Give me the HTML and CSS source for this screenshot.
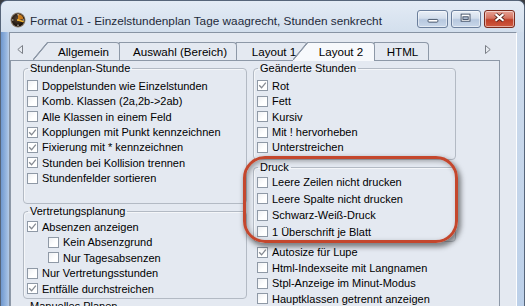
FILE: index.html
```html
<!DOCTYPE html>
<html lang="de">
<head>
  <meta charset="UTF-8" />
  <title>Format 01</title>
  <link rel="stylesheet" href="styles.css">
</head>
<body>

  <div class="window">
    <div class="titlebar">
      <!-- Programm-Icon (Uhr) -->
      <svg class="app-icon" viewBox="0 0 16 16" aria-hidden="true">
        <defs>
          <radialGradient id="face" cx="45%" cy="40%" r="60%">
            <stop offset="0" stop-color="#5a4634"/>
            <stop offset="1" stop-color="#120c08"/>
          </radialGradient>
        </defs>
        <circle cx="8" cy="8" r="7.5" fill="#8a7a68"/>
        <circle cx="8" cy="8" r="6.5" fill="url(#face)"/>
        <path d="M8 8 L8 2.2 A5.8 5.8 0 0 1 13.5 7 Z" fill="#e08a1e" opacity="0.85"/>
        <path d="M8 8 L13 9.5" stroke="#f2b430" stroke-width="1.6" stroke-linecap="round"/>
        <path d="M8 2 V3.4 M8 12.6 V14 M2 8 H3.4 M12.6 8 H14" stroke="#e8e2d8" stroke-width="1"/>
        <circle cx="8" cy="8" r="1" fill="#f2b430"/>
      </svg>
      <span class="title">Format 01 - Einzelstundenplan Tage waagrecht, Stunden senkrecht</span>
      <div class="caption-buttons">
        <span class="cbtn">
          <svg viewBox="0 0 31 18"><rect x="10.5" y="9.5" width="11" height="3" rx="1" fill="#fff" stroke="#3b4a60"/></svg>
        </span>
        <span class="cbtn">
          <svg viewBox="0 0 30 18"><rect x="9.5" y="3.5" width="10" height="8" fill="#fff" stroke="#3b4a60"/><rect x="11.5" y="6.5" width="6" height="3" fill="#a9b9cf" stroke="#3b4a60"/></svg>
        </span>
        <span class="cbtn close">
          <svg viewBox="0 0 31 18"><path d="M11 3.5 L20 11 M20 3.5 L11 11" stroke="#4a1a12" stroke-width="4.2"/><path d="M11 3.5 L20 11 M20 3.5 L11 11" stroke="#fff" stroke-width="2.4"/></svg>
        </span>
      </div>
    </div>

    <div class="client">
      <div class="tabstrip">
        <svg class="tab-arrow" viewBox="0 0 6 9"><path d="M5.5 0.5 L0.8 4.5 L5.5 8.5 Z" fill="#e8ecf2" stroke="#7a7f87"/></svg>
        <div class="tabs">
          <div class="tab t1">Allgemein</div>
          <div class="tab t2">Auswahl (Bereich)</div>
          <div class="tab t3">Layout 1</div>
          <div class="tab t4 active">Layout 2</div>
          <div class="tab t5">HTML</div>
        </div>
        <svg class="tab-arrow right" viewBox="0 0 6 9"><path d="M0.5 0.5 L5.2 4.5 L0.5 8.5 Z" fill="#e8ecf2" stroke="#7a7f87"/></svg>
      </div>

      <div class="panel">
        <div class="col left">
          <fieldset class="group g1">
            <legend>Stundenplan-Stunde</legend>
            <label class="opt"><span class="box"></span>Doppelstunden wie Einzelstunden</label>
            <label class="opt"><span class="box"></span>Komb. Klassen (2a,2b-&gt;2ab)</label>
            <label class="opt"><span class="box"></span>Alle Klassen in einem Feld</label>
            <label class="opt"><span class="box on"></span>Kopplungen mit Punkt kennzeichnen</label>
            <label class="opt"><span class="box on"></span>Fixierung mit * kennzeichnen</label>
            <label class="opt"><span class="box on"></span>Stunden bei Kollision trennen</label>
            <label class="opt"><span class="box"></span>Stundenfelder sortieren</label>
          </fieldset>
          <fieldset class="group g2">
            <legend>Vertretungsplanung</legend>
            <label class="opt"><span class="box on"></span>Absenzen anzeigen</label>
            <label class="opt sub"><span class="box"></span>Kein Absenzgrund</label>
            <label class="opt sub"><span class="box"></span>Nur Tagesabsenzen</label>
            <label class="opt"><span class="box"></span>Nur Vertretungsstunden</label>
            <label class="opt"><span class="box on"></span>Entfälle durchstreichen</label>
          </fieldset>
          <fieldset class="group g3">
            <legend>Manuelles Planen</legend>
          </fieldset>
        </div>

        <div class="col right">
          <fieldset class="group g4">
            <legend>Geänderte Stunden</legend>
            <label class="opt"><span class="box on"></span>Rot</label>
            <label class="opt"><span class="box"></span>Fett</label>
            <label class="opt"><span class="box"></span>Kursiv</label>
            <label class="opt"><span class="box"></span>Mit ! hervorheben</label>
            <label class="opt"><span class="box"></span>Unterstreichen</label>
          </fieldset>
          <fieldset class="group g5">
            <legend>Druck</legend>
            <label class="opt"><span class="box"></span>Leere Zeilen nicht drucken</label>
            <label class="opt"><span class="box"></span>Leere Spalte nicht drucken</label>
            <label class="opt"><span class="box"></span>Schwarz-Weiß-Druck</label>
            <label class="opt"><span class="box"></span>1 Überschrift je Blatt</label>
          </fieldset>
          <div class="loose">
            <label class="opt"><span class="box on"></span>Autosize für Lupe</label>
            <label class="opt"><span class="box"></span>Html-Indexseite mit Langnamen</label>
            <label class="opt"><span class="box"></span>Stpl-Anzeige im Minut-Modus</label>
            <label class="opt"><span class="box"></span>Hauptklassen getrennt anzeigen</label>
          </div>
        </div>
      </div>
    </div>

    <!-- Markierung um die Gruppe "Druck" -->
    <div class="callout" aria-hidden="true"></div>
  </div>

</body>
</html>
```

FILE: styles.css
```css
* {
  box-sizing: border-box;
}

body {
  margin: 0;
  width: 525px;
  height: 306px;
  overflow: hidden;
  background: #3a3d42;
  font-family: 'Liberation Sans', Arial, sans-serif;
  font-size: 11px;
  color: #000;
}

/* Fensterrahmen */
.window {
  position: relative;
  height: 306px;
  border: 1px solid #56657a;
  border-bottom: none;
  border-radius: 7px 7px 0 0;
  padding: 0 7px 0 7px;
  background:
    linear-gradient(90deg, #6f98cf 0, #9dbbe2 6px, rgba(190,208,232,0) 9px),
    linear-gradient(180deg, #dde7f3 0, #cfdcec 32px, #bcd0e9 100%);
}

.titlebar {
  display: flex;
  align-items: flex-start;
  height: 31px;
  padding-left: 2px;
  margin: 0 -7px;
  padding-right: 7px;
  padding-left: 9px;
  border-radius: 6px 6px 0 0;
  background: linear-gradient(180deg, #e3ebf5 0, #d3dfed 100%);
}
.app-icon {
  width: 16px;
  height: 16px;
  margin-top: 11px;
  flex: none;
}
.title {
  margin-left: 4px;
  margin-top: 12px;
  line-height: 16px;
  font-size: 11.8px;
  color: #1e2a3a;
  white-space: nowrap;
}
.caption-buttons {
  display: flex;
  gap: 3px;
  margin-left: auto;
  margin-top: 9px;
  margin-right: 2px;
}
.cbtn {
  width: 31px;
  height: 18px;
  border: 1px solid #6b7f9c;
  border-radius: 3px;
  background: linear-gradient(180deg, #e9eff7 0, #d3deec 45%, #b7c8df 55%, #c9d7e9 100%);
  box-shadow: inset 0 0 0 1px rgba(255,255,255,0.5);
}
.cbtn:nth-child(2) {
  width: 30px;
}
.cbtn svg {
  display: block;
  width: 100%;
  height: 100%;
}
.cbtn.close {
  border-color: #7a2b1d;
  background: linear-gradient(180deg, #e6a295 0, #d4725f 45%, #bf3f27 55%, #cf5a40 100%);
}

/* Clientbereich */
.client {
  height: calc(100% - 31px);
  margin-left: 1px;
  border-top: 1px solid #8793a3;
  border-left: 1px solid #8793a3;
  border-right: 1px solid #fdfeff;
  background: #e4e9f1;
}

.tabstrip {
  display: flex;
  align-items: flex-end;
  height: 27px;
  padding-left: 7px;
}
.tab-arrow {
  width: 6px;
  height: 9px;
  margin-bottom: 6px;
  flex: none;
}
.tab-arrow.right {
  margin-left: auto;
  margin-right: 25px;
}
.tabs {
  display: flex;
  margin-left: 25px;
}
.tab {
  position: relative;
  height: 18px;
  border-top: 1px solid #8d98a7;
  border-right: 1px solid #8d98a7;
  border-top-right-radius: 4px;
  background: #e4e9f1;
  text-align: center;
  line-height: 17px;
  font-size: 11.6px;
  white-space: nowrap;
}
.tab::before {
  content: '';
  position: absolute;
  left: -15px;
  top: -1px;
  bottom: 0;
  width: 15px;
  background: linear-gradient(to top left, #e4e9f1 calc(50% - 1px), #8d98a7 calc(50% - 0.4px), #8d98a7 calc(50% + 0.4px), transparent calc(50% + 1px));
}
.t1 { width: 72px; z-index: 5; }
.t2 { width: 117px; z-index: 4; padding-left: 4px; }
.t3 { width: 71px; z-index: 3; padding-left: 4px; }
.t4 { width: 67px; z-index: 10; }
.t5 { width: 54px; z-index: 1; padding-left: 2px; }
.tab.active {
  height: 19px;
  margin-bottom: -1px;
  background: #f7f9fc;
}
.tab.active::before {
  bottom: 1px;
  background: linear-gradient(to top left, #f7f9fc calc(50% - 1px), #8d98a7 calc(50% - 0.4px), #8d98a7 calc(50% + 0.4px), transparent calc(50% + 1px));
}
.tab.active::after {
  content: '';
  position: absolute;
  left: -15px;
  bottom: 0;
  width: 15px;
  height: 1px;
  background: #f7f9fc;
}

.panel {
  display: flex;
  gap: 6px;
  width: 490px;
  height: calc(100% - 27px);
  border: 1px solid #8d98a7;
  border-bottom: none;
  padding-left: 12px;
}
.col {
  display: flex;
  flex-direction: column;
}
.col.left { width: 224px; }
.col.right { width: 203px; }

/* Gruppenrahmen */
.group {
  margin: 0;
  padding: 3px 0 0 3px;
  border: 1px solid #b3bac4;
  border-radius: 4px;
  box-shadow: inset 1px 1px 0 rgba(255,255,255,0.6);
}
.group legend {
  padding: 0 2px;
  margin-left: 1px;
  line-height: 14px;
}
.g1 { padding-bottom: 17px; }
.g2 { padding-top: 1px; padding-bottom: 2px; }
.g3 { height: 20px; }
.g4 { padding-bottom: 4px; }
.g5 { padding-top: 0; padding-bottom: 1px; }
.g5 .opt { height: 16.4px; }
.loose {
  margin-top: 3px;
  padding-left: 4px;
}

.opt {
  display: flex;
  align-items: center;
  gap: 4px;
  height: 15.45px;
  white-space: nowrap;
}
.opt.sub {
  padding-left: 21px;
}
.box {
  flex: none;
  width: 11px;
  height: 11px;
  border: 1px solid #8f99a6;
  background: linear-gradient(135deg, #eef0f3 0, #ffffff 60%);
}
.box.on {
  background: #fff url("data:image/svg+xml,%3Csvg xmlns='http://www.w3.org/2000/svg' viewBox='0 0 9 9'%3E%3Cpath d='M1.2 4.2 L3.6 6.8 L7.8 1.6' fill='none' stroke='%23858a92' stroke-width='1.3'/%3E%3C/svg%3E") center / 9px 9px no-repeat;
}

/* rote Hervorhebung */
.callout {
  position: absolute;
  left: 242px;
  top: 155px;
  width: 215px;
  height: 87px;
  border: 3px solid #c4472d;
  border-radius: 22px;
  box-shadow: 2px 3px 5px 1px rgba(40,40,40,0.55), inset 2px 2px 5px 0 rgba(40,40,40,0.4);
  pointer-events: none;
}
```
